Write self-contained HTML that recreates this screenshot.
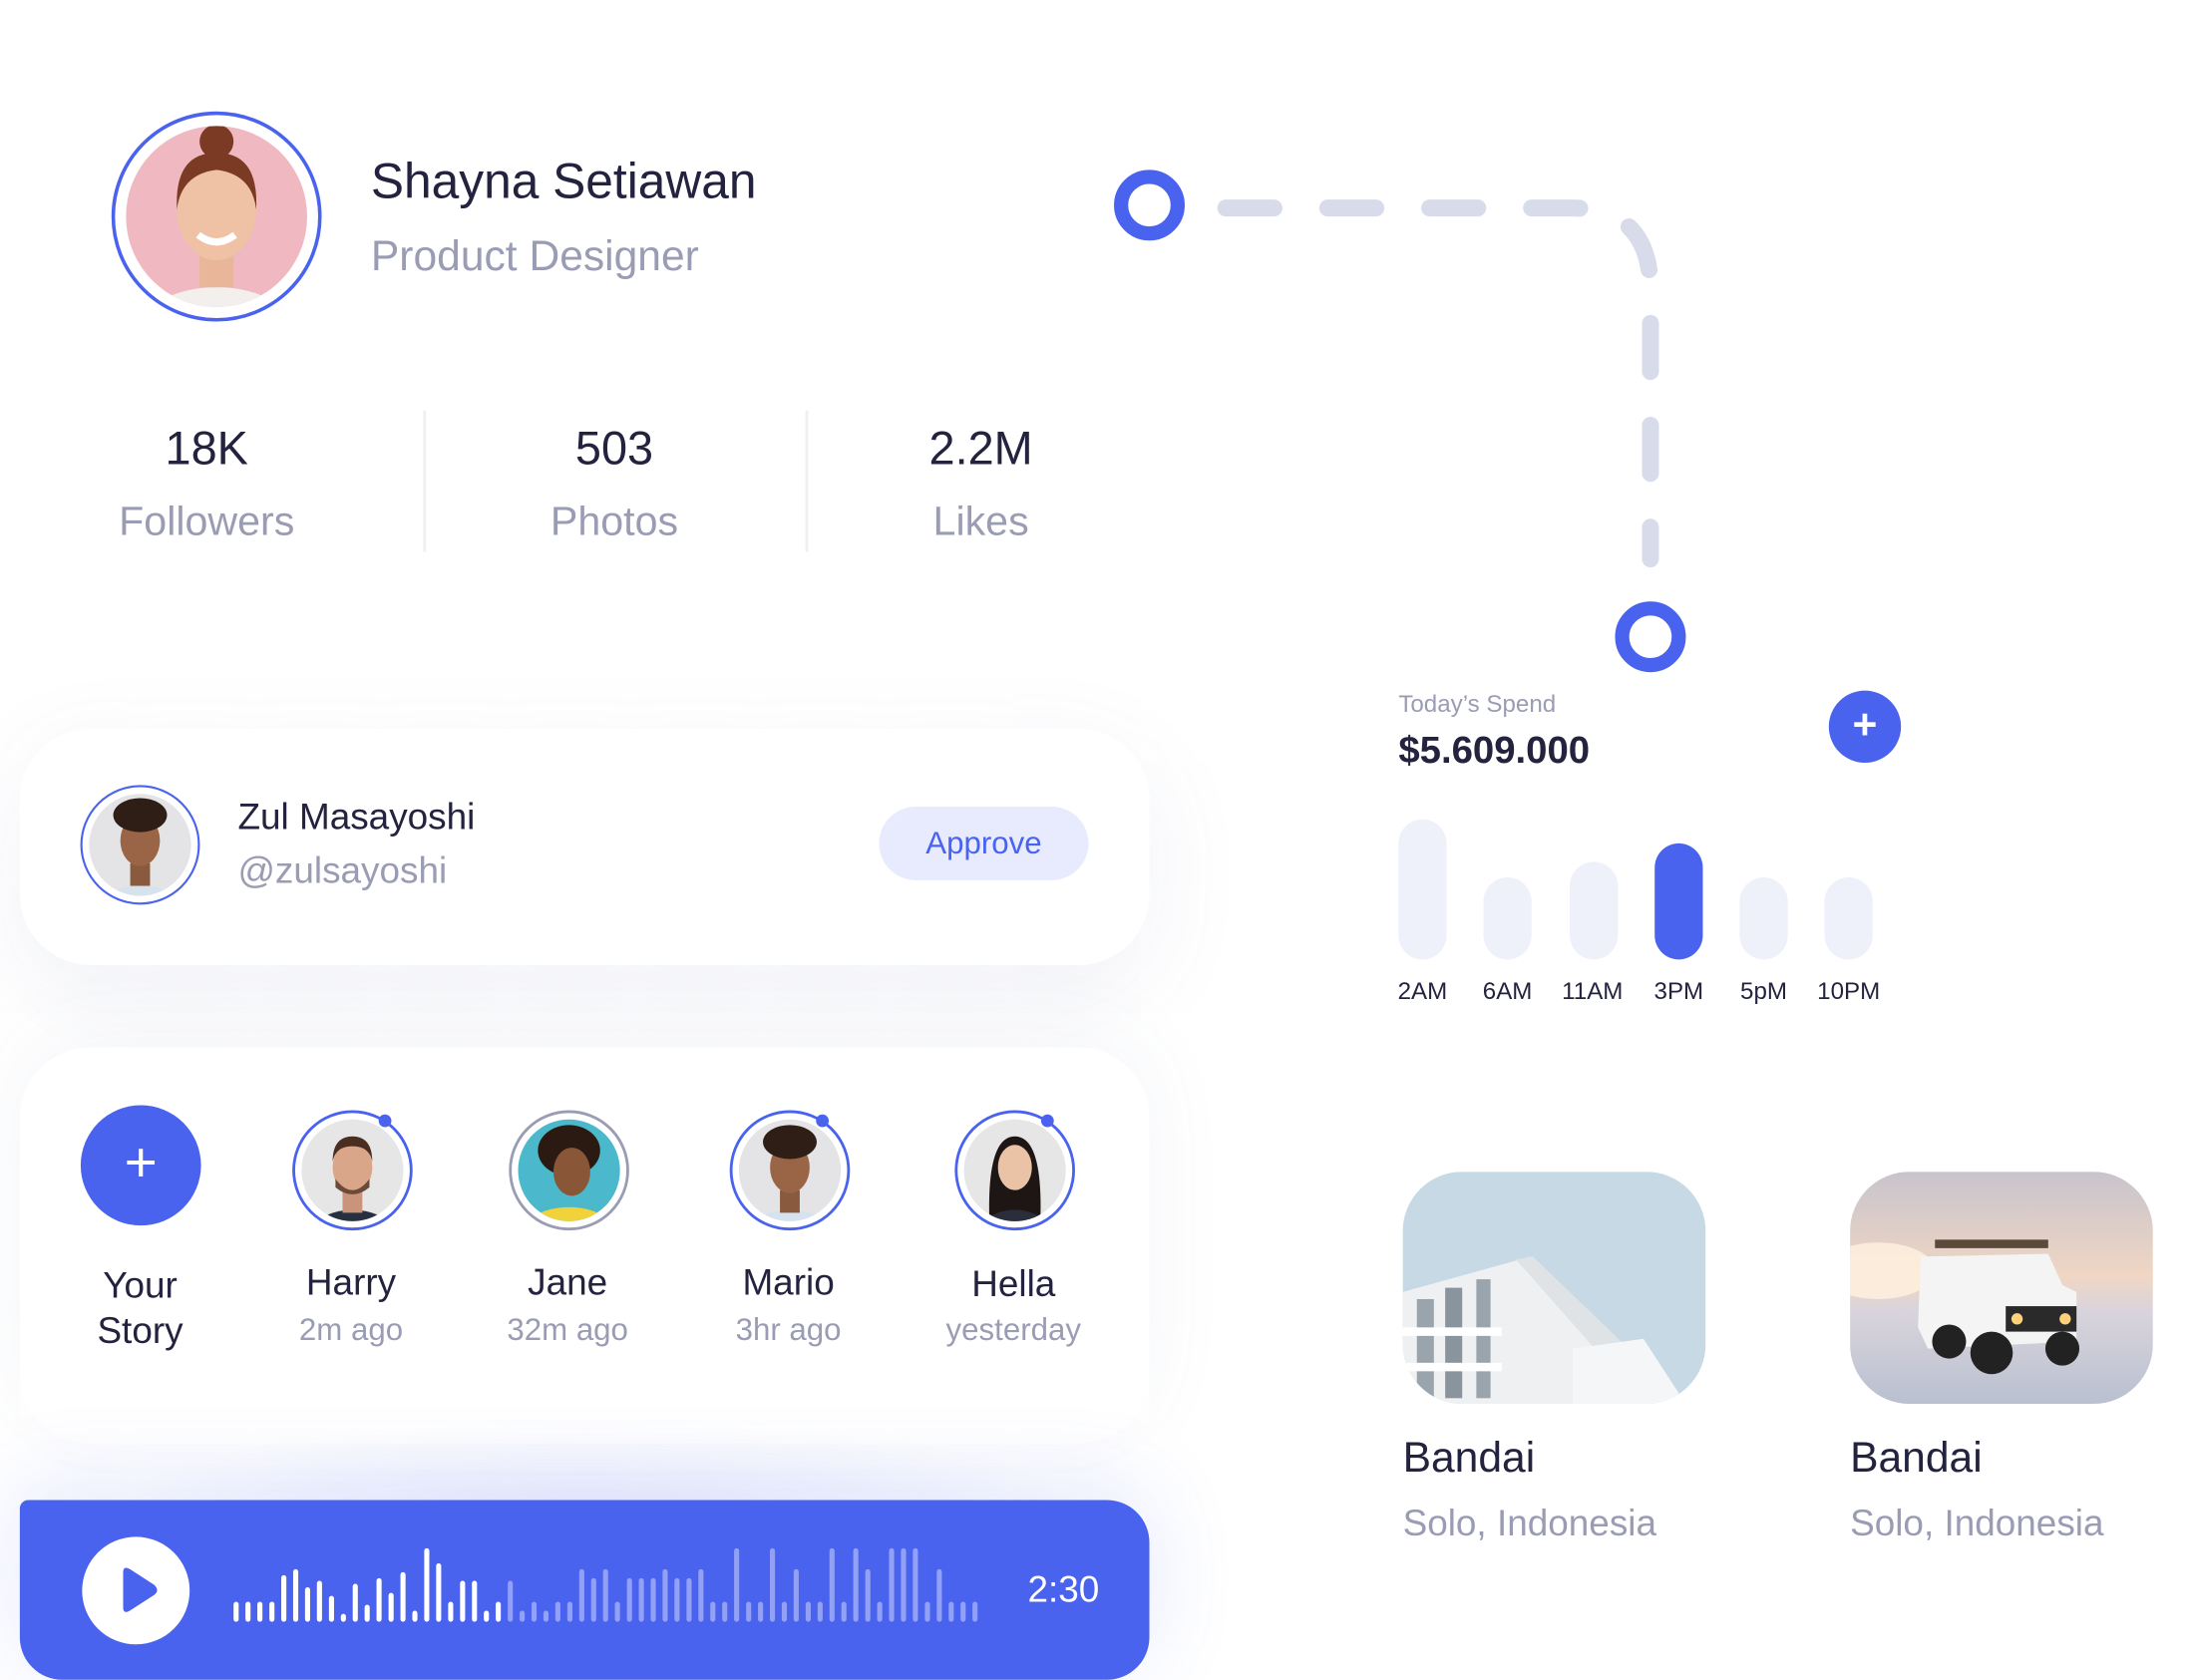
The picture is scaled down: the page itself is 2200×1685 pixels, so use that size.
<!DOCTYPE html>
<html><head><meta charset="utf-8">
<style>
*{margin:0;padding:0;box-sizing:border-box}
html,body{width:2200px;height:1680px;overflow:hidden;background:#fff}
#w{position:absolute;left:0;top:0;width:1550px;height:1184px;transform:scale(1.41935);transform-origin:0 0;font-family:"Liberation Sans",sans-serif;color:#23233f}
.a{position:absolute}
.t{position:absolute;white-space:nowrap;line-height:1}
.g{color:#9a9cb4}
.c{transform:translateX(-50%);text-align:center}
.card{position:absolute;background:#fff;border-radius:50px}
</style></head><body>
<div id="w">
<!-- soft glows -->
<div class="a" style="left:14px;top:515px;width:798px;height:167px;border-radius:50px;box-shadow:0 20px 70px rgba(90,100,160,0.09)"></div>
<div class="a" style="left:14px;top:740px;width:798px;height:280px;border-radius:50px;box-shadow:0 -10px 60px rgba(90,100,160,0.06)"></div>
<div class="a" style="left:60px;top:1000px;width:720px;height:80px;background:radial-gradient(ellipse at 50% 100%,rgba(74,99,238,0.12),rgba(74,99,238,0) 70%)"></div>

<!-- profile -->
<svg class="a" style="left:78px;top:78px" width="150" height="150" viewBox="0 0 150 150">
<circle cx="75" cy="75" r="73" fill="#fff" stroke="#4a63ee" stroke-width="2.5"/>
<clipPath id="cp"><circle cx="75" cy="75" r="64"/></clipPath>
<g clip-path="url(#cp)"><rect width="150" height="150" fill="#f0b8c0"/>
<ellipse cx="75" cy="150" rx="50" ry="25" fill="#f2efed"/>
<rect x="63" y="95" width="24" height="30" fill="#e9b69a"/>
<ellipse cx="75" cy="70" rx="28" ry="36" fill="#efc2a6"/>
<path d="M47 70 Q45 30 75 30 Q105 30 103 70 Q100 45 75 42 Q50 45 47 70Z" fill="#7a3a24"/>
<circle cx="75" cy="22" r="12" fill="#7a3a24"/>
<path d="M62 88 Q75 98 88 88" stroke="#fff" stroke-width="5" fill="none"/></g>
</svg>
<div class="t" style="left:262px;top:111px;font-size:35px;font-weight:500">Shayna Setiawan</div>
<div class="t g" style="left:262px;top:167px;font-size:30px">Product Designer</div>

<div class="t c" style="left:146px;top:300px;font-size:33px">18K</div>
<div class="t c g" style="left:146px;top:355px;font-size:29px">Followers</div>
<div class="t c" style="left:434px;top:300px;font-size:33px">503</div>
<div class="t c g" style="left:434px;top:355px;font-size:29px">Photos</div>
<div class="t c" style="left:693px;top:300px;font-size:33px">2.2M</div>
<div class="t c g" style="left:693px;top:355px;font-size:29px">Likes</div>
<div class="a" style="left:299px;top:290px;width:2px;height:100px;background:#eef0f4"></div>
<div class="a" style="left:569px;top:290px;width:2px;height:100px;background:#eef0f4"></div>

<!-- dashed path -->
<svg class="a" style="left:760px;top:90px" width="460" height="420" viewBox="760 90 460 420">
<path d="M866 147 H1110 Q1166 147 1166 205 V395" stroke="#d8dcea" stroke-width="12" fill="none" stroke-linecap="round" stroke-dasharray="34 38"/>
<circle cx="812" cy="145" r="20" fill="#fff" stroke="#4a63ee" stroke-width="10"/>
<circle cx="1166" cy="450" r="20" fill="#fff" stroke="#4a63ee" stroke-width="10"/>
</svg>

<!-- card 1 -->
<div class="card" style="left:14px;top:515px;width:798px;height:167px"></div>
<svg class="a" style="left:56px;top:554px" width="86" height="86" viewBox="0 0 86 86">
<circle cx="43" cy="43" r="41.5" fill="#fff" stroke="#4a63ee" stroke-width="1.5"/>
<clipPath id="c1"><circle cx="43" cy="43" r="36"/></clipPath>
<g clip-path="url(#c1)"><rect width="86" height="86" fill="#e4e4e6"/>
<ellipse cx="43" cy="88" rx="30" ry="16" fill="#d6e2ee"/>
<rect x="36" y="56" width="14" height="16" fill="#8a5a3e"/>
<ellipse cx="43" cy="40" rx="14" ry="18" fill="#9a6446"/>
<ellipse cx="43" cy="22" rx="19" ry="12" fill="#2e1e16"/></g>
</svg>
<div class="t" style="left:168px;top:564px;font-size:26px;font-weight:500">Zul Masayoshi</div>
<div class="t g" style="left:168px;top:602px;font-size:26px">@zulsayoshi</div>
<div class="a" style="left:621px;top:570px;width:148px;height:52px;border-radius:26px;background:#e8ebfd;color:#4a63ee;font-size:22px;text-align:center;line-height:52px">Approve</div>

<!-- card 2 stories -->
<div class="card" style="left:14px;top:740px;width:798px;height:300px;background:linear-gradient(#fff 75%,rgba(255,255,255,0))"></div>
<div class="a" style="left:57px;top:781px;width:85px;height:85px;border-radius:50%;background:#4a63ee;color:#fff;font-size:40px;text-align:center;line-height:82px">+</div>
<div class="t c" style="left:99px;top:892px;font-size:26px;font-weight:500;line-height:32px">Your<br>Story</div>

<svg class="a" style="left:205px;top:783px" width="88" height="88" viewBox="0 0 88 88">
<circle cx="44" cy="44" r="41.5" fill="#fff" stroke="#4a63ee" stroke-width="2"/>
<clipPath id="c2"><circle cx="44" cy="44" r="36"/></clipPath>
<g clip-path="url(#c2)"><rect width="88" height="88" fill="#e6e6e6"/>
<ellipse cx="44" cy="90" rx="30" ry="18" fill="#263040"/>
<rect x="37" y="58" width="14" height="16" fill="#c99479"/>
<ellipse cx="44" cy="42" rx="14" ry="18" fill="#d9a68a"/>
<path d="M30 38 Q30 20 44 20 Q58 20 58 38 Q56 27 44 27 Q32 27 30 38Z" fill="#4a2e22"/>
<path d="M32 50 Q44 66 56 50 L56 56 Q44 66 32 56Z" fill="#6a4a3a"/></g>
<circle cx="67" cy="9" r="4.5" fill="#4a63ee"/>
</svg>
<svg class="a" style="left:358px;top:783px" width="88" height="88" viewBox="0 0 88 88">
<circle cx="44" cy="44" r="41.5" fill="#fff" stroke="#9a9cb4" stroke-width="2"/>
<clipPath id="c3"><circle cx="44" cy="44" r="36"/></clipPath>
<g clip-path="url(#c3)"><rect width="88" height="88" fill="#4cb8cc"/>
<ellipse cx="44" cy="88" rx="32" ry="18" fill="#f2d23a"/>
<ellipse cx="44" cy="30" rx="22" ry="18" fill="#2a1a12"/>
<ellipse cx="46" cy="45" rx="13" ry="17" fill="#8a5638"/></g>
</svg>
<svg class="a" style="left:514px;top:783px" width="88" height="88" viewBox="0 0 88 88">
<circle cx="44" cy="44" r="41.5" fill="#fff" stroke="#4a63ee" stroke-width="2"/>
<clipPath id="c4"><circle cx="44" cy="44" r="36"/></clipPath>
<g clip-path="url(#c4)"><rect width="88" height="88" fill="#e4e4e6"/>
<ellipse cx="44" cy="90" rx="30" ry="18" fill="#d6e2ee"/>
<rect x="37" y="58" width="14" height="16" fill="#8a5a3e"/>
<ellipse cx="44" cy="42" rx="14" ry="18" fill="#9a6446"/>
<ellipse cx="44" cy="24" rx="19" ry="12" fill="#2e1e16"/></g>
<circle cx="67" cy="9" r="4.5" fill="#4a63ee"/>
</svg>
<svg class="a" style="left:673px;top:783px" width="88" height="88" viewBox="0 0 88 88">
<circle cx="44" cy="44" r="41.5" fill="#fff" stroke="#4a63ee" stroke-width="2"/>
<clipPath id="c5"><circle cx="44" cy="44" r="36"/></clipPath>
<g clip-path="url(#c5)"><rect width="88" height="88" fill="#e6e6e6"/>
<path d="M26 80 Q24 20 44 20 Q64 20 62 80Z" fill="#1e1614"/>
<ellipse cx="44" cy="90" rx="26" ry="18" fill="#2a2e3a"/>
<ellipse cx="44" cy="42" rx="12" ry="16" fill="#eac2a6"/></g>
<circle cx="67" cy="9" r="4.5" fill="#4a63ee"/>
</svg>
<div class="t c" style="left:248px;top:893px;font-size:26px;font-weight:500">Harry</div>
<div class="t c g" style="left:248px;top:929px;font-size:22px">2m ago</div>
<div class="t c" style="left:401px;top:893px;font-size:26px;font-weight:500">Jane</div>
<div class="t c g" style="left:401px;top:929px;font-size:22px">32m ago</div>
<div class="t c" style="left:557px;top:893px;font-size:26px;font-weight:500">Mario</div>
<div class="t c g" style="left:557px;top:929px;font-size:22px">3hr ago</div>
<div class="t c" style="left:716px;top:894px;font-size:26px;font-weight:500">Hella</div>
<div class="t c g" style="left:716px;top:929px;font-size:22px">yesterday</div>

<!-- audio -->
<div class="a" style="left:14px;top:1060px;width:798px;height:127px;background:#4a63ee;border-radius:6px 30px 30px 30px;box-shadow:0 -10px 60px rgba(74,99,238,0.15)"></div>
<svg class="a" style="left:57px;top:1085px" width="78" height="78" viewBox="0 0 78 78">
<circle cx="39" cy="39" r="38" fill="#fff"/>
<path d="M30 26 Q30 21 35 24 L52 35 Q56 39 52 42 L35 53 Q30 56 30 51Z" fill="#4a63ee"/>
</svg>
<svg id="wave" class="a" style="left:160px;top:1085px" width="545" height="65"></svg>
<div class="t" style="left:726px;top:1110px;font-size:26px;color:#fff">2:30</div>

<!-- spend -->
<div class="t g" style="left:988px;top:489px;font-size:17px;color:#9a9cb4">Today’s Spend</div>
<div class="t" style="left:988px;top:517px;font-size:27px;font-weight:700">$5.609.000</div>
<div class="a" style="left:1292px;top:488px;width:51px;height:51px;border-radius:50%;background:#4a63ee;color:#fff;font-size:30px;font-weight:700;text-align:center;line-height:50px">+</div>
<div class="a" style="left:988px;top:579px;width:34px;height:99px;border-radius:17px;background:#eef0fa"></div>
<div class="a" style="left:1048px;top:620px;width:34px;height:58px;border-radius:17px;background:#eef0fa"></div>
<div class="a" style="left:1109px;top:609px;width:34px;height:69px;border-radius:17px;background:#eef0fa"></div>
<div class="a" style="left:1169px;top:596px;width:34px;height:82px;border-radius:17px;background:#4a63ee"></div>
<div class="a" style="left:1229px;top:620px;width:34px;height:58px;border-radius:17px;background:#eef0fa"></div>
<div class="a" style="left:1289px;top:620px;width:34px;height:58px;border-radius:17px;background:#eef0fa"></div>
<div class="t c" style="left:1005px;top:692px;font-size:17px;font-weight:500">2AM</div>
<div class="t c" style="left:1065px;top:692px;font-size:17px;font-weight:500">6AM</div>
<div class="t c" style="left:1125px;top:692px;font-size:17px;font-weight:500">11AM</div>
<div class="t c" style="left:1186px;top:692px;font-size:17px;font-weight:500">3PM</div>
<div class="t c" style="left:1246px;top:692px;font-size:17px;font-weight:500">5pM</div>
<div class="t c" style="left:1306px;top:692px;font-size:17px;font-weight:500">10PM</div>

<!-- photos -->
<svg class="a" style="left:991px;top:828px" width="214" height="164" viewBox="0 0 214 164">
<clipPath id="p1"><rect width="214" height="164" rx="42"/></clipPath>
<g clip-path="url(#p1)"><rect width="214" height="164" fill="#c6d9e4"/>
<path d="M0 85 L90 60 L200 164 L0 164Z" fill="#eef0f2"/>
<path d="M80 62 L92 60 L200 164 L170 164Z" fill="#dfe3e6"/>
<rect x="10" y="90" width="12" height="70" fill="#9aa4ac"/><rect x="30" y="82" width="12" height="78" fill="#8a949c"/><rect x="52" y="76" width="10" height="84" fill="#9aa4ac"/>
<rect x="0" y="110" width="70" height="6" fill="#fff"/><rect x="0" y="135" width="70" height="6" fill="#fff"/>
<path d="M120 164 L120 125 L170 118 L200 164Z" fill="#f4f6f7"/></g>
</svg>
<svg class="a" style="left:1307px;top:828px" width="214" height="164" viewBox="0 0 214 164">
<defs><linearGradient id="sk" x1="0" y1="0" x2="0" y2="1"><stop offset="0" stop-color="#c8c4cc"/><stop offset="0.45" stop-color="#f0d6c4"/><stop offset="0.6" stop-color="#d9d4dc"/><stop offset="1" stop-color="#b9c0d0"/></linearGradient></defs>
<clipPath id="p2"><rect width="214" height="164" rx="42"/></clipPath>
<g clip-path="url(#p2)"><rect width="214" height="164" fill="url(#sk)"/>
<ellipse cx="20" cy="70" rx="40" ry="20" fill="#fff3e0" opacity="0.8"/>
<path d="M50 60 L140 58 L150 80 L160 85 L160 120 L55 125 L48 110Z" fill="#f4f4f4"/>
<rect x="110" y="95" width="50" height="18" fill="#2a2a2a"/>
<rect x="60" y="48" width="80" height="6" fill="#5a4a3a"/>
<circle cx="70" cy="120" r="12" fill="#222"/><circle cx="100" cy="128" r="15" fill="#222"/><circle cx="150" cy="125" r="12" fill="#222"/>
<circle cx="118" cy="104" r="4" fill="#ffd27a"/><circle cx="152" cy="104" r="4" fill="#ffd27a"/></g>
</svg>
<div class="t" style="left:991px;top:1016px;font-size:30px;font-weight:500">Bandai</div>
<div class="t g" style="left:991px;top:1063px;font-size:26px">Solo, Indonesia</div>
<div class="t" style="left:1307px;top:1016px;font-size:30px;font-weight:500">Bandai</div>
<div class="t g" style="left:1307px;top:1063px;font-size:26px">Solo, Indonesia</div>
</div>
<script>
var tops=[268,268,268,268,188,170,224,205,250,304,214,277,197,241,179,295,107,152,268,205,205,295,268,
205,295,268,295,268,268,170,197,170,268,197,197,197,170,197,197,170,268,268,107,268,268,107,268,170,268,268,107,268,107,170,268,107,107,107,268,170,268,268,268];
var s='';for(var i=0;i<tops.length;i++){var h=(328-tops[i])/4.257;var x=5+i*8.42;
s+='<rect x="'+x.toFixed(1)+'" y="'+(61-h).toFixed(1)+'" width="3.6" height="'+h.toFixed(1)+'" rx="1.8" fill="'+(i<23?'#fff':'rgba(255,255,255,0.4)')+'"/>';}
document.getElementById('wave').innerHTML=s;
</script>
</body></html>
